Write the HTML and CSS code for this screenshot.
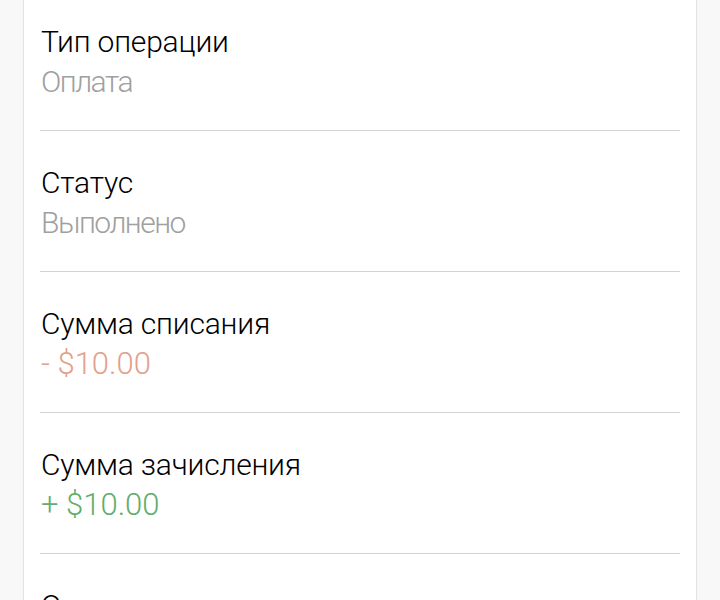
FILE: index.html
```html
<!DOCTYPE html>
<html lang="ru">
<head>
  <meta charset="UTF-8" />
  <title>Детали операции</title>
  <link rel="stylesheet" href="styles.css">
</head>
<body>
  <div class="card">
    <div class="row">
      <div class="label">Тип операции</div>
      <div class="value">Оплата</div>
    </div>
    <div class="row">
      <div class="label">Статус</div>
      <div class="value">Выполнено</div>
    </div>
    <div class="row">
      <div class="label">Сумма списания</div>
      <div class="value amount minus">- $10.00</div>
    </div>
    <div class="row">
      <div class="label">Сумма зачисления</div>
      <div class="value amount plus">+ $10.00</div>
    </div>
    <div class="row">
      <div class="label">Описание</div>
      <div class="value">Оплата услуг</div>
    </div>
  </div>
</body>
</html>
```

FILE: styles.css
```css
body {
  font-family: Roboto, "Noto Sans", sans-serif;
  background: #f8f8f8;
  margin: 0;
  padding: 0 24px;
  overflow: hidden;
}

.card {
  background: white;
  margin-top: -10px;
  padding: 0 16px;
  box-shadow: 0 0 2px rgba(0, 0, 0, 0.25);
}

.row {
  padding: 32px 1px 28px;
  border-bottom: 1px solid #d2d2d2;
}

.label,
.value {
  font-size: 30px;
  font-weight: 300;
  line-height: 40px;
}

.label {
  color: #000;
  letter-spacing: -0.2px;
}

.value {
  color: #a0a0a0;
  letter-spacing: -1.5px;
}

.value.amount {
  font-size: 31px;
  letter-spacing: 0;
}

.value.minus {
  color: #e2a18b;
}

.value.plus {
  color: #5fae6b;
}
```
